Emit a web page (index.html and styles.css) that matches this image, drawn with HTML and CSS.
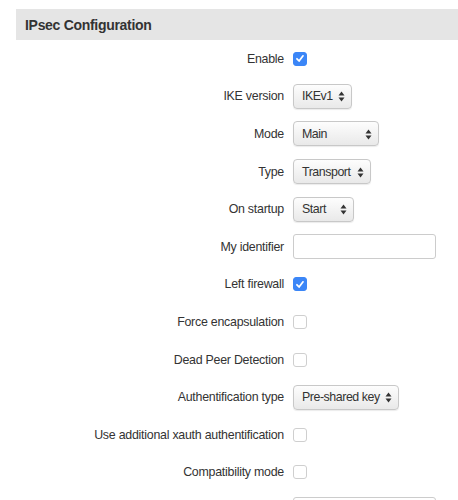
FILE: index.html
```html
<!DOCTYPE html>
<html>
<head>
<meta charset="utf-8">
<link rel="stylesheet" href="styles.css">
</head>
<body>
<div class="panel">
  <div class="header"><h2 class="title">IPsec Configuration</h2></div>
  <div class="form">
    <div class="row"><label class="lbl">Enable</label><span class="cb on"><svg viewBox="0 0 13 13" width="13" height="13"><path d="M3.2 6.8 L5.5 9.2 L9.8 3.6" fill="none" stroke="#fff" stroke-width="1.9" stroke-linecap="round" stroke-linejoin="round"/></svg></span></div>
    <div class="row"><label class="lbl">IKE version</label><span class="sel w-ike">IKEv1<svg class="arr" viewBox="0 0 7 11" width="7" height="11"><path d="M3.5 0.5 L6.5 4.5 L0.5 4.5 Z M3.5 10.5 L6.5 6.5 L0.5 6.5 Z" fill="#333"/></svg></span></div>
    <div class="row"><label class="lbl">Mode</label><span class="sel w-mode">Main<svg class="arr" viewBox="0 0 7 11" width="7" height="11"><path d="M3.5 0.5 L6.5 4.5 L0.5 4.5 Z M3.5 10.5 L6.5 6.5 L0.5 6.5 Z" fill="#333"/></svg></span></div>
    <div class="row"><label class="lbl">Type</label><span class="sel w-type">Transport<svg class="arr" viewBox="0 0 7 11" width="7" height="11"><path d="M3.5 0.5 L6.5 4.5 L0.5 4.5 Z M3.5 10.5 L6.5 6.5 L0.5 6.5 Z" fill="#333"/></svg></span></div>
    <div class="row"><label class="lbl">On startup</label><span class="sel w-start">Start<svg class="arr" viewBox="0 0 7 11" width="7" height="11"><path d="M3.5 0.5 L6.5 4.5 L0.5 4.5 Z M3.5 10.5 L6.5 6.5 L0.5 6.5 Z" fill="#333"/></svg></span></div>
    <div class="row"><label class="lbl">My identifier</label><span class="inp"></span></div>
    <div class="row"><label class="lbl">Left firewall</label><span class="cb on"><svg viewBox="0 0 13 13" width="13" height="13"><path d="M3.2 6.8 L5.5 9.2 L9.8 3.6" fill="none" stroke="#fff" stroke-width="1.9" stroke-linecap="round" stroke-linejoin="round"/></svg></span></div>
    <div class="row"><label class="lbl">Force encapsulation</label><span class="cb"></span></div>
    <div class="row"><label class="lbl">Dead Peer Detection</label><span class="cb"></span></div>
    <div class="row"><label class="lbl">Authentification type</label><span class="sel w-auth">Pre-shared key<svg class="arr" viewBox="0 0 7 11" width="7" height="11"><path d="M3.5 0.5 L6.5 4.5 L0.5 4.5 Z M3.5 10.5 L6.5 6.5 L0.5 6.5 Z" fill="#333"/></svg></span></div>
    <div class="row"><label class="lbl">Use additional xauth authentification</label><span class="cb"></span></div>
    <div class="row"><label class="lbl">Compatibility mode</label><span class="cb"></span></div>
    <div class="row"><label class="lbl"></label><span class="inp"></span></div>
  </div>
</div>
</body>
</html>
```
FILE: styles.css
```css
html, body {
  margin: 0;
  padding: 0;
  background: #fff;
  overflow: hidden;
}
body {
  font-family: "Liberation Sans", Arial, sans-serif;
  color: #333;
  padding: 9px 0 0 16px;
}
.header {
  background: #e5e5e5;
  height: 31px;
  display: flex;
  align-items: center;
  padding-left: 9px;
}
.title {
  margin: 0;
  font-size: 14px;
  letter-spacing: -0.3px;
  font-weight: bold;
  color: #333;
}
.form {
  display: flex;
  flex-direction: column;
}
.row {
  height: 37.6px;
  display: grid;
  grid-template-columns: 268px auto;
  column-gap: 9px;
  align-items: center;
  justify-items: start;
}
.lbl {
  justify-self: end;
  font-size: 12.4px;
  letter-spacing: -0.25px;
  color: #333;
  white-space: nowrap;
}
.cb {
  width: 12px;
  height: 12px;
  border: 1px solid #cfcfcf;
  border-radius: 3px;
  background: #fff;
  box-sizing: content-box;
  display: flex;
  align-items: center;
  justify-content: center;
}
.cb.on {
  background: #3b86f7;
  border-color: #3b86f7;
}
.cb svg {
  display: block;
}
.sel {
  position: relative;
  box-sizing: border-box;
  height: 25px;
  border: 1px solid #c8c8c8;
  border-radius: 4px;
  background: linear-gradient(#fdfdfd, #e9e9e9);
  box-shadow: 0 1px 1px rgba(0,0,0,0.08);
  font-size: 12.4px;
  letter-spacing: -0.45px;
  color: #333;
  display: flex;
  align-items: center;
  padding-left: 8px;
}
.arr {
  position: absolute;
  right: 6px;
  top: 6.5px;
}
.w-ike { width: 59px; }
.w-mode { width: 86px; }
.w-type { width: 78px; }
.w-start { width: 61px; }
.w-auth { width: 106px; }
.inp {
  box-sizing: border-box;
  width: 143px;
  height: 25px;
  border: 1px solid #ccc;
  border-radius: 3px;
  background: #fff;
}
```
